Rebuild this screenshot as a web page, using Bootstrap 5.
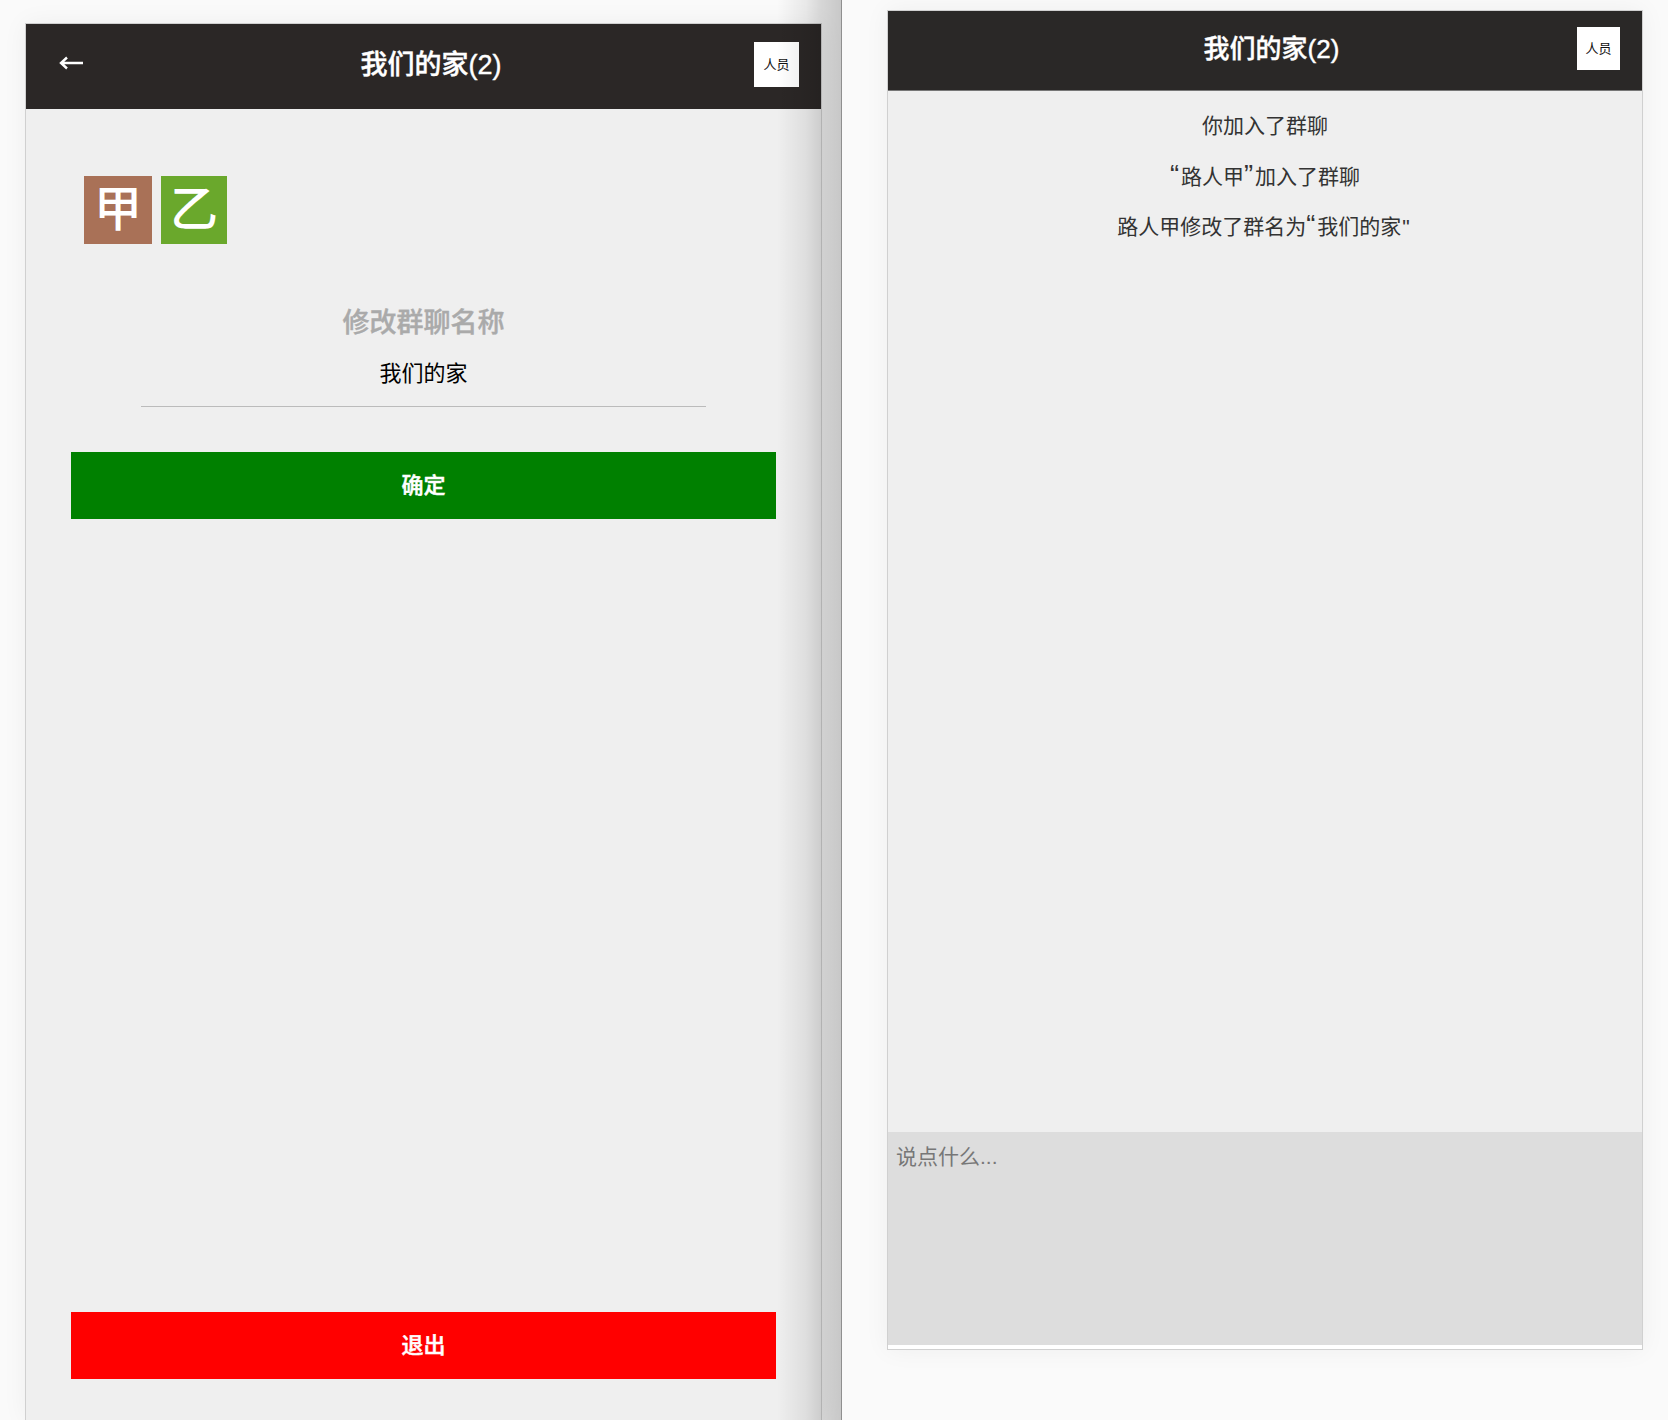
<!DOCTYPE html>
<html lang="zh-CN">
<head>
<meta charset="utf-8">
<title>我们的家</title>
<link href="https://cdn.jsdelivr.net/npm/bootstrap@5.3.0/dist/css/bootstrap.min.css" rel="stylesheet">
<style>
html,body{height:1420px;overflow:hidden}
body{background:#fafafa;font-family:"Liberation Sans","Noto Sans CJK SC",sans-serif;color:#333}
.left-pane{width:842px;height:1420px;padding:23px 20px 0 25px;background:#fafafa;position:relative;flex:none;border-right:1px solid #8f8f8f}
.left-pane::after{content:"";position:absolute;top:0;bottom:0;right:0;width:64px;pointer-events:none;background:linear-gradient(to right,rgba(0,0,0,0),rgba(0,0,0,.07) 45%,rgba(0,0,0,.14) 68%,rgba(0,0,0,.2) 100%)}
.phone{background:#efefef;border:1px solid #d0d0d0;box-shadow:0 0 24px rgba(0,0,0,.05)}
.phone-left{width:797px;height:1397px;border-bottom:0}
.phone-right{width:756px;height:1340px;margin:10px 0 0 45px;background:#fff}
.head-bar{background:#2b2726;color:#fff}
.head-left{height:85px;padding:0 22px 0 33px}
.head-right{height:80px;padding:0 22px 0 0;background:#2a2827;border-bottom:1px solid #777}
.head-title{font-size:27px;font-weight:500;line-height:1;-webkit-text-stroke:.4px currentColor}
.head-left .head-title{padding-left:25px;padding-bottom:2px}
.head-right .head-title{font-size:26px;padding-left:78px;padding-bottom:4px}
.people-btn{width:45px;height:45px;background:#fff;color:#111;font-size:13px;border:0;padding:0;flex:none;margin-bottom:4px}
.head-right .people-btn{width:43px;height:43px;margin-bottom:4px}
.arrow-icon{width:24px;height:14px;flex:none;margin-bottom:8px}
.avatar-row{padding:67px 0 0 58px;gap:9px}
.avatar-tile{width:68px;height:68px;color:#fff;font-size:48px;font-weight:500;line-height:1}
.tile-a{background:#a97157}
.tile-b{background:#6aa82c;width:66px}
.rename-title{font-size:27px;font-weight:500;color:#aaa;line-height:34px;margin:62px 0 0;-webkit-text-stroke:.4px currentColor}
.rename-input{display:block;width:565px;margin:15px auto 0;height:52px;padding:0 0 19px;background:transparent;border:0;border-bottom:1px solid #bbb;border-radius:0;text-align:center;font-size:22px;color:#000;outline:0}
.wide-btn{display:block;height:67px;margin:0 45px;width:705px;border:0;border-radius:0;color:#fff;font-size:22px;font-weight:500;-webkit-text-stroke:.5px currentColor}
.btn-ok{background:#008000;margin-top:45px}
.btn-quit{background:#f00;margin-bottom:41px}
.msg-list{padding-top:20px;height:1041px;flex:none;background:#efefef}
.msg-line{font-size:21px;line-height:30px;margin:0 0 20.5px;text-align:center;color:#333}
.quote-mark{font-size:1.3em;line-height:0;letter-spacing:2px}
.quote-plain{padding:0 3px 0 1px}
.msg-box{display:block;width:100%;height:213px;border:0;border-radius:0;background:#ddd;padding:10px 8px 8px;font-size:21px;line-height:30px;resize:none;outline:0;color:#333}
.msg-box::placeholder{color:#777;opacity:1}
</style>
</head>
<body class="d-flex m-0">
<div class="left-pane">
  <section class="phone phone-left d-flex flex-column">
    <header class="head-bar head-left d-flex align-items-center">
      <svg class="arrow-icon" viewBox="0 0 24 14" aria-hidden="true"><path d="M2 7H24M8 1.5 2 7l6 5.5" fill="none" stroke="#fff" stroke-width="2.4"/></svg>
      <div class="head-title flex-grow-1 text-center">我们的家(2)</div>
      <button class="people-btn" type="button">人员</button>
    </header>
    <div class="avatar-row d-flex">
      <div class="avatar-tile tile-a d-flex align-items-center justify-content-center">甲</div>
      <div class="avatar-tile tile-b d-flex align-items-center justify-content-center">乙</div>
    </div>
    <h2 class="rename-title text-center">修改群聊名称</h2>
    <input class="rename-input" type="text" value="我们的家">
    <button class="wide-btn btn-ok" type="button">确定</button>
    <button class="wide-btn btn-quit mt-auto" type="button">退出</button>
  </section>
</div>
<section class="phone phone-right d-flex flex-column">
  <header class="head-bar head-right d-flex align-items-center flex-none">
    <div class="head-title flex-grow-1 text-center">我们的家(2)</div>
    <button class="people-btn" type="button">人员</button>
  </header>
  <div class="msg-list">
    <p class="msg-line">你加入了群聊</p>
    <p class="msg-line"><span class="quote-mark">“</span>路人甲<span class="quote-mark">”</span>加入了群聊</p>
    <p class="msg-line">路人甲修改了群名为<span class="quote-mark">“</span>我们的家<span class="quote-plain">"</span></p>
  </div>
  <textarea class="msg-box" placeholder="说点什么..."></textarea>
</section>
</body>
</html>
